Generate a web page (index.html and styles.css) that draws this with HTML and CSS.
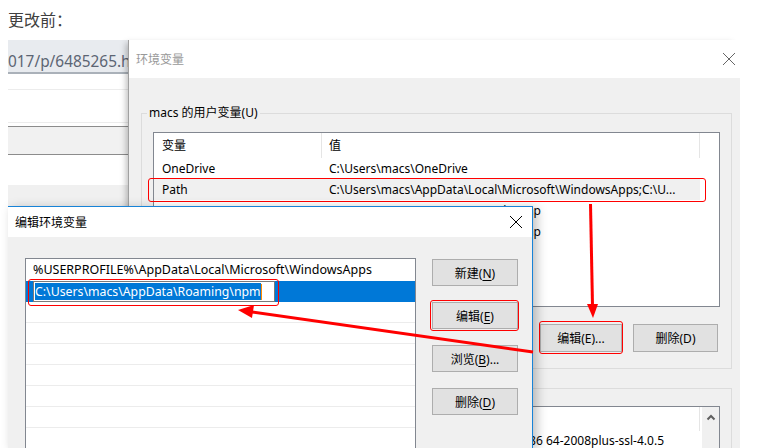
FILE: index.html
```html
<!DOCTYPE html>
<html lang="zh-CN">
<head>
    <meta charset="UTF-8">
    <meta name="viewport" content="width=device-width, initial-scale=1.0">
    <title>更改前</title>
    <link rel="stylesheet" href="styles.css">
</head>
<body>
    <p class="caption">更改前：</p>

    <!-- bout de navigateur derrière les fenêtres -->
    <div class="browser">
        <div class="address">017/p/6485265.html</div>
        <div class="band b1"></div>
        <div class="band b2"></div>
        <div class="band b3"></div>
        <div class="band b4"></div>
        <div class="band b5"></div>
        <div class="band b6"></div>
    </div>

    <!-- fenêtre "环境变量" (inactive) -->
    <div class="win env">
        <div class="titlebar">
            <span>环境变量</span>
            <svg class="close" width="14" height="14" viewBox="0 0 14 14"><path d="M1 1L13 13M13 1L1 13" stroke="currentColor" stroke-width="1"/></svg>
        </div>
        <div class="env-body">
            <fieldset class="group">
                <legend>macs 的用户变量(U)</legend>
                <div class="lv user-list">
                    <div class="lv-main">
                        <div class="lv-head">
                            <div class="c-name">变量</div>
                            <div class="c-value">值</div>
                        </div>
                        <div class="lv-row">
                            <div class="c-name">OneDrive</div>
                            <div class="c-value">C:\Users\macs\OneDrive</div>
                        </div>
                        <div class="lv-row sel mark mark-path">
                            <div class="c-name">Path</div>
                            <div class="c-value">C:\Users\macs\AppData\Local\Microsoft\WindowsApps;C:\U...</div>
                        </div>
                        <div class="lv-row">
                            <div class="c-name">TEMP</div>
                            <div class="c-value tight">%USERPROFILE%\AppData\Local\Temp</div>
                        </div>
                        <div class="lv-row">
                            <div class="c-name">TMP</div>
                            <div class="c-value tight">%USERPROFILE%\AppData\Local\Temp</div>
                        </div>
                    </div>
                </div>
                <div class="btns">
                    <button class="btn btn-edit mark mark-env-edit">编辑(E)...</button>
                    <button class="btn">删除(D)</button>
                </div>
            </fieldset>

            <fieldset class="group sys">
                <legend>系统变量(S)</legend>
                <div class="lv sys-list">
                    <div class="lv-main">
                        <div class="lv-head">
                            <div class="c-name">变量</div>
                            <div class="c-value">值</div>
                        </div>
                        <div class="lv-row">
                            <div class="c-name">MONGODB_HOME</div>
                            <div class="c-value">C:\Program Files\mongodb-win32-x86 64-2008plus-ssl-4.0.5</div>
                        </div>
                    </div>
                    <div class="scrollbar">
                        <svg width="10" height="7" viewBox="0 0 10 7"><path d="M1.5 5.5L5 2L8.5 5.5" fill="none" stroke="#606060" stroke-width="2"/></svg>
                    </div>
                </div>
            </fieldset>
        </div>
    </div>

    <!-- fenêtre "编辑环境变量" (active) -->
    <div class="win edit">
        <div class="titlebar">
            <span>编辑环境变量</span>
            <svg class="close" width="14" height="14" viewBox="0 0 14 14"><path d="M1 1L13 13M13 1L1 13" stroke="currentColor" stroke-width="1"/></svg>
        </div>
        <div class="edit-body">
            <div class="path-list">
                <div class="p-row">%USERPROFILE%\AppData\Local\Microsoft\WindowsApps</div>
                <div class="p-row current">
                    <div class="inplace mark mark-input">
                        <span class="seltext">C:\Users\macs\AppData\Roaming\npm</span><span class="caret"></span>
                    </div>
                </div>
                <div class="p-row empty"></div>
                <div class="p-row empty"></div>
                <div class="p-row empty"></div>
                <div class="p-row empty"></div>
                <div class="p-row empty"></div>
                <div class="p-row empty"></div>
                <div class="p-row empty"></div>
            </div>
            <div class="side-btns">
                <button class="btn wide">新建(<u>N</u>)</button>
                <button class="btn wide mark mark-edit">编辑(<u>E</u>)</button>
                <button class="btn wide">浏览(<u>B</u>)...</button>
                <button class="btn wide">删除(<u>D</u>)</button>
            </div>
        </div>
    </div>

    <!-- flèches d'annotation -->
    <svg class="arrows" width="758" height="448" viewBox="0 0 758 448">
        <line x1="590.5" y1="204" x2="592.5" y2="306" stroke="#f00" stroke-width="3"/>
        <polygon points="587,304 598,304 593,318" fill="#f00"/>
        <line x1="533" y1="352" x2="252" y2="312" stroke="#f00" stroke-width="3"/>
        <polygon points="238,310 254,305 252,318" fill="#f00"/>
    </svg>
</body>
</html>
```

FILE: styles.css
```css
* {
    box-sizing: border-box;
}

body {
    margin: 0;
    width: 758px;
    height: 448px;
    position: relative;
    overflow: hidden;
    background-color: #ffffff;
    font-family: "Noto Sans", "Noto Sans CJK SC", sans-serif;
    font-size: 12px;
    color: #000000;
}

.caption {
    margin: 0;
    padding: 11px 8px;
    font-size: 16px;
    line-height: 18px;
    color: #404040;
}

/* navigateur en arrière-plan */
.browser {
    position: absolute;
    left: 8px;
    top: 40px;
    width: 125px;
    height: 166px;
    display: flex;
    flex-direction: column;
}

.address {
    height: 34px;
    padding-top: 13px;
    background-color: #e8ebef;
    border-bottom: 2px solid #aab1b9;
    color: #5c6573;
    font-size: 15.4px;
    line-height: 18px;
    white-space: nowrap;
    overflow: hidden;
}

.band { flex: none; }
.b1 { height: 16px; border-bottom: 1px solid #ececec; }
.b2 { height: 33px; border-bottom: 1px solid #ececec; }
.b3 { height: 4px; border-bottom: 1px solid #8c8c8c; }
.b4 { height: 28px; background-color: #f1f1f1; border-bottom: 1px solid #8c8c8c; }
.b5 { height: 30px; }
.b6 { height: 21px; background-color: #f0f0f0; }

/* fenêtres */
.win {
    position: absolute;
    overflow: hidden;
    background-color: #f0f0f0;
}

.titlebar {
    display: flex;
    align-items: center;
    justify-content: space-between;
    background-color: #ffffff;
}

.env {
    left: 128px;
    top: 40px;
    width: 612px;
    height: 408px;
    border-left: 1px solid #a0a0a0;
    overflow: visible;
    box-shadow: -5px 0 6px -3px rgba(0, 0, 0, 0.25);
}

.env .titlebar {
    height: 38px;
    padding: 0 4px 0 7px;
    color: #999999;
}

.env .close {
    color: #666666;
}

.env-body {
    height: 370px;
    overflow: hidden;
    padding: 0 8px 0 12px;
}

.group {
    margin: 27px 0 0 0;
    padding: 11px 11px 16px 11px;
    border: 1px solid #dcdcdc;
    min-width: 0;
}

.group.sys {
    margin-top: 11px;
    padding-top: 10px;
}

.group legend {
    margin-left: -6px;
    padding: 0 2px;
    line-height: 16px;
}

.lv {
    display: flex;
    background-color: #ffffff;
    border: 1px solid #828790;
}

.user-list {
    height: 175px;
}

.sys-list {
    height: 90px;
}

.lv-main {
    width: 546px;
}

.lv-head {
    display: flex;
    height: 25px;
    line-height: 25px;
    border-right: 1px solid #e5e5e5;
}

.sys-list .lv-head {
    height: 24px;
}

.lv-head .c-name {
    border-right: 1px solid #e5e5e5;
}

.lv-row {
    display: flex;
    height: 21px;
    line-height: 21px;
}

.sys-list .lv-row {
    line-height: 19px;
}

.lv-row.sel {
    background-color: #f0f0f0;
}

.c-name {
    width: 168px;
    padding-left: 8px;
    white-space: nowrap;
    overflow: hidden;
}

.c-value {
    flex: 1;
    padding-left: 7px;
    white-space: nowrap;
    overflow: hidden;
}

.c-value.tight {
    letter-spacing: -0.25px;
}

.scrollbar {
    width: 17px;
    margin-left: 2px;
    background-color: #f0f0f0;
    display: flex;
    justify-content: center;
    padding-top: 7px;
}

.btns {
    display: flex;
    justify-content: flex-end;
    gap: 11px;
    margin-top: 17px;
    padding-right: 2px;
}

.btn {
    height: 28px;
    width: 85px;
    padding: 0;
    background-color: #e1e1e1;
    border: 1px solid #adadad;
    font-family: inherit;
    font-size: 12px;
    color: #000000;
}

.btn-edit {
    width: 82px;
}

.btn u {
    text-decoration-thickness: 1px;
    text-underline-offset: 2px;
}

/* dialogue d'édition */
.edit {
    left: 8px;
    top: 206px;
    width: 525px;
    height: 242px;
    border-top: 1px solid #1883d7;
    border-right: 1px solid #1883d7;
    box-shadow: 4px 2px 10px rgba(0, 0, 0, 0.25);
}

.edit .titlebar {
    height: 30px;
    padding: 0 9px 0 7px;
}

.edit-body {
    display: flex;
    gap: 16px;
    padding: 21px 0 0 17px;
}

.path-list {
    flex: none;
    width: 391px;
    height: 200px;
    background-color: #ffffff;
    border: 1px solid #828790;
    font-size: 12.5px;
}

.p-row {
    height: 21px;
    line-height: 21px;
    padding-left: 7px;
    white-space: nowrap;
}

.p-row.current {
    background-color: #0078d7;
}

.p-row.empty {
    border-bottom: 1px solid #ececec;
}

.inplace {
    width: 242px;
    height: 21px;
    margin-top: 1px;
    padding: 1px;
    background-color: #ffffff;
    border: 1px solid #7a7a7a;
    display: flex;
    align-items: center;
    line-height: 17px;
    font-size: 12.3px;
}

.seltext {
    background-color: #0078d7;
    color: #ffffff;
}

.caret {
    display: inline-block;
    width: 1px;
    height: 16px;
    background-color: #ff8c00;
}

.side-btns {
    display: flex;
    flex-direction: column;
    gap: 16px;
    padding-top: 1px;
}

.btn.wide {
    width: 86px;
    height: 27px;
}

/* cadres rouges */
.mark {
    position: relative;
}

.mark::after {
    content: "";
    position: absolute;
    border: 1px solid #ff0000;
    border-radius: 3px;
    pointer-events: none;
}

.mark-path::after { top: -1px; bottom: -2px; left: -6px; right: -6px; }
.mark-env-edit::after { top: -4px; bottom: -3px; left: -2px; right: -2px; }
.mark-input::after { top: -3px; bottom: -5px; left: -6px; right: -5px; }
.mark-edit::after { top: -3px; bottom: -3px; left: -3px; right: -2px; }

.arrows {
    position: absolute;
    left: 0;
    top: 0;
    pointer-events: none;
}
```
